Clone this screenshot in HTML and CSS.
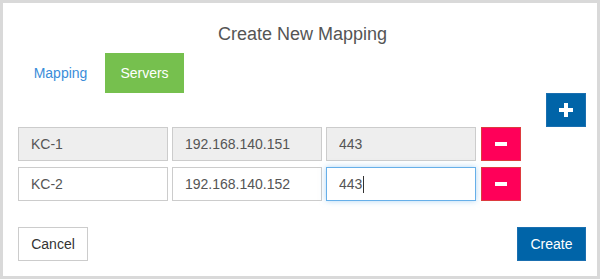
FILE: index.html
```html
<!DOCTYPE html>
<html lang="en">
<head>
  <meta charset="UTF-8" />
  <title>Create New Mapping</title>
  <link rel="stylesheet" href="styles.css">
</head>
<body>
  <div class="modal">
    <h4 class="title">Create New Mapping</h4>

    <div class="tabs">
      <a class="tab tab-mapping">Mapping</a>
      <a class="tab tab-servers active">Servers</a>
    </div>

    <div class="add-row">
      <button class="btn-add" title="Add server">
        <svg width="14" height="14" viewBox="0 0 14 14"><path d="M5 0h4v5h5v4H9v5H5V9H0V5h5z" fill="#fff"/></svg>
      </button>
    </div>

    <div class="servers">
      <div class="server-row">
        <input type="text" value="KC-1" disabled />
        <input type="text" value="192.168.140.151" disabled />
        <input type="text" value="443" disabled />
        <button class="btn-remove"><span class="minus"></span></button>
      </div>
      <div class="server-row">
        <input type="text" value="KC-2" />
        <input type="text" value="192.168.140.152" />
        <div class="input-wrap">
          <input type="text" value="443" class="focused" />
          <span class="caret"></span>
        </div>
        <button class="btn-remove"><span class="minus"></span></button>
      </div>
    </div>

    <div class="footer">
      <button class="btn-cancel">Cancel</button>
      <button class="btn-create">Create</button>
    </div>
  </div>
</body>
</html>
```

FILE: styles.css
```css
body {
  margin: 0;
  font-family: "Liberation Sans", Arial, sans-serif;
}

.modal {
  width: 600px;
  height: 279px;
  box-sizing: border-box;
  border: 3px solid #d9d9d9;
  background-color: #ffffff;
  padding: 21px 11px 0 15px;
}

.title {
  margin: 0;
  font-size: 18px;
  line-height: 20px;
  font-weight: normal;
  color: #555555;
  text-align: center;
  padding-left: 1px;
}

.tabs {
  display: flex;
  gap: 2px;
  margin-top: 9px;
}

.tab {
  display: block;
  height: 40px;
  line-height: 40px;
  font-size: 14px;
  text-align: center;
  color: #3a8dd9;
  cursor: pointer;
}

.tab-mapping {
  width: 85px;
}

.tab-servers {
  width: 79px;
}

.tab.active {
  background-color: #76c04e;
  color: #ffffff;
}

.add-row {
  display: flex;
  justify-content: flex-end;
}

.btn-add {
  width: 40px;
  height: 34px;
  background-color: #0064a8;
  border: 1px solid #1a6fb0;
  display: flex;
  align-items: center;
  justify-content: center;
  padding: 0;
  cursor: pointer;
}

.btn-add svg {
  display: block;
}

.servers {
  display: flex;
  flex-direction: column;
  gap: 6px;
}

.server-row {
  display: flex;
  gap: 4px;
}

.server-row input {
  width: 150px;
  height: 34px;
  box-sizing: border-box;
  border: 1px solid #cccccc;
  padding: 6px 12px;
  font-family: inherit;
  font-size: 14px;
  color: #555555;
  background-color: #ffffff;
  outline: none;
}

.server-row input:disabled {
  background-color: #eeeeee;
  color: #555555;
}

.server-row input.focused {
  border-color: #66afe9;
  box-shadow: 0 0 6px rgba(102, 175, 233, 0.5);
}

.input-wrap {
  position: relative;
}

.caret {
  position: absolute;
  left: 37px;
  top: 9px;
  width: 1px;
  height: 17px;
  background-color: #333333;
}

.btn-remove {
  width: 40px;
  height: 34px;
  margin-left: 1px;
  background-color: #ff0059;
  border: 1px solid #dd3a3e;
  display: flex;
  align-items: center;
  justify-content: center;
  padding: 0;
  cursor: pointer;
}

.minus {
  display: block;
  width: 12px;
  height: 4px;
  background-color: #ffffff;
}

.footer {
  display: flex;
  justify-content: space-between;
  margin-top: 26px;
}

.footer button {
  height: 34px;
  font-family: inherit;
  font-size: 14px;
  padding: 0 12px;
  cursor: pointer;
}

.btn-cancel {
  width: 70px;
  background-color: #ffffff;
  border: 1px solid #cccccc;
  color: #333333;
}

.btn-create {
  width: 69px;
  background-color: #0064a8;
  border: 1px solid #1a6fb0;
  color: #ffffff;
}
```
